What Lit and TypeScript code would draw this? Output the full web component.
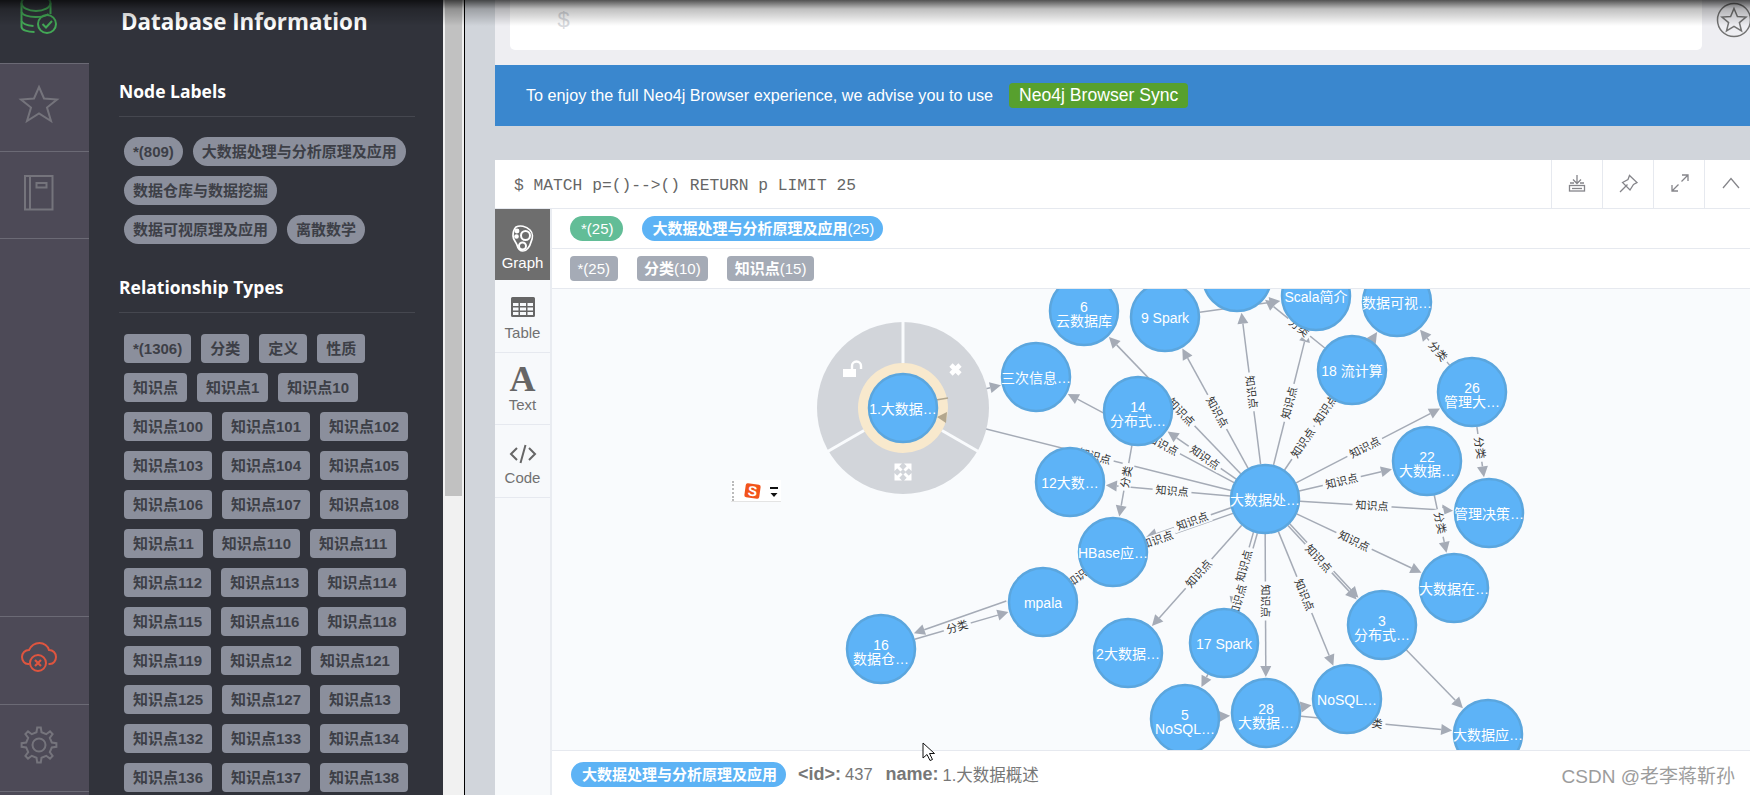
import { LitElement, html, css, svg } from "lit";
import { customElement } from "lit/decorators.js";

type N = { x: number; y: number; t: string[] };
const nodes: Record<string, N> = {
  n1: { x: 903, y: 408, t: ["1.大数据…"] },
  san: { x: 1036, y: 377, t: ["三次信息…"] },
  yun: { x: 1084, y: 311, t: ["6", "云数据库"] },
  s9: { x: 1165, y: 317, t: ["9 Spark"] },
  top: { x: 1237, y: 277, t: [] },
  scala: { x: 1316, y: 296, t: ["Scala简介"] },
  viz: { x: 1397, y: 302, t: ["数据可视…"] },
  s18: { x: 1352, y: 370, t: ["18 流计算"] },
  g26: { x: 1472, y: 392, t: ["26", "管理大…"] },
  d14: { x: 1138, y: 411, t: ["14", "分布式…"] },
  d22: { x: 1427, y: 461, t: ["22", "大数据…"] },
  hub: { x: 1265, y: 499, t: ["大数据处…"] },
  d12: { x: 1070, y: 482, t: ["12大数…"] },
  mg: { x: 1489, y: 513, t: ["管理决策…"] },
  hb: { x: 1113, y: 552, t: ["HBase应…"] },
  mp: { x: 1043, y: 602, t: ["mpala"] },
  d16: { x: 881, y: 649, t: ["16", "数据仓…"] },
  d2: { x: 1128, y: 653, t: ["2大数据…"] },
  s17: { x: 1224, y: 643, t: ["17 Spark"] },
  d5: { x: 1185, y: 719, t: ["5", "NoSQL…"] },
  d28: { x: 1266, y: 713, t: ["28", "大数据…"] },
  nq: { x: 1347, y: 699, t: ["NoSQL…"] },
  d3: { x: 1382, y: 625, t: ["3", "分布式…"] },
  zai: { x: 1454, y: 588, t: ["大数据在…"] },
  yy: { x: 1488, y: 734, t: ["大数据应…"] },
};

type E = { a: string; b: string; off?: number; off2?: number; labels?: [string, number, number][] };
const K = "知识点";
const F = "分类";
const edges: E[] = [
  { a: "hub", b: "yun", labels: [[K, 1180, 413]] },
  { a: "hub", b: "s9", labels: [[K, 1217, 412]] },
  { a: "hub", b: "top", labels: [[K, 1251, 392]] },
  { a: "hub", b: "scala", labels: [[K, 1290, 403]] },
  { a: "hub", b: "s18", labels: [[K, 1303, 443], [K, 1326, 410]] },
  { a: "hub", b: "g26", labels: [[K, 1365, 448]] },
  { a: "hub", b: "d22", labels: [[K, 1342, 482]] },
  { a: "hub", b: "mg", labels: [[K, 1372, 506]] },
  { a: "hub", b: "zai", labels: [[K, 1354, 541]] },
  { a: "hub", b: "d3", off: 1.2, labels: [[K, 1319, 558]] },
  { a: "hub", b: "d3", off: -1.2 },
  { a: "hub", b: "nq", labels: [[K, 1304, 595]] },
  { a: "hub", b: "d28", labels: [[K, 1266, 601]] },
  { a: "hub", b: "s17", off: 2, labels: [[K, 1247, 567]] },
  { a: "hub", b: "s17", off: -2, labels: [[K, 1230, 598]] },
  { a: "hub", b: "d2", labels: [[K, 1198, 573]] },
  { a: "hub", b: "hb", off: 3, labels: [[K, 1193, 523]] },
  { a: "hub", b: "hb", off: -3, labels: [[K, 1160, 548]] },
  { a: "hub", b: "d14", labels: [[K, 1205, 457]] },
  { a: "hub", b: "san", labels: [[K, 1162, 446]] },
  { a: "hub", b: "n1", labels: [[K, 1095, 455]] },
  { a: "hub", b: "d12", labels: [[K, 1172, 491]] },
  { a: "n1", b: "san" },
  { a: "d14", b: "hb", labels: [[F, 1127, 477]] },
  { a: "s18", b: "viz" },
  { a: "s18", b: "top", labels: [[F, 1297, 330]] },
  { a: "s9", b: "scala" },
  { a: "g26", b: "viz", labels: [[F, 1437, 352]] },
  { a: "g26", b: "mg", labels: [[F, 1479, 448]] },
  { a: "d22", b: "zai", labels: [[F, 1440, 523]] },
  { a: "hb", b: "mp", labels: [["知识", 1073, 573]] },
  { a: "mp", b: "d16", off: 13, off2: 4 },
  { a: "d16", b: "mp", labels: [[F, 957, 626]] },
  { a: "s17", b: "d5" },
  { a: "d5", b: "d28" },
  { a: "d28", b: "nq" },
  { a: "d28", b: "yy", labels: [["类", 1377, 724]] },
  { a: "d3", b: "yy" },
];

function edgeLine(e: E) {
  const A = nodes[e.a];
  const B = nodes[e.b];
  const off = e.off ?? 0;
  const off2 = e.off2 ?? off;
  const dx0 = B.x - A.x;
  const dy0 = B.y - A.y;
  const l0 = Math.hypot(dx0, dy0);
  const p = { x: -dy0 / l0, y: dx0 / l0 };
  const ax = A.x + p.x * off;
  const ay = A.y + p.y * off;
  const cx = B.x + p.x * off2;
  const cy = B.y + p.y * off2;
  const dx = cx - ax;
  const dy = cy - ay;
  const len = Math.hypot(dx, dy);
  const ux = dx / len;
  const uy = dy / len;
  const sx = ax + ux * 35;
  const sy = ay + uy * 35;
  const tip = e.b === "n1" ? 45 : 36;
  const tx = cx - ux * tip;
  const ty = cy - uy * tip;
  const bx = tx - ux * 11;
  const by = ty - uy * 11;
  const head = `${tx},${ty} ${bx - uy * 5.5},${by + ux * 5.5} ${bx + uy * 5.5},${by - ux * 5.5}`;
  let ang = (Math.atan2(dy, dx) * 180) / Math.PI;
  if (ang > 90) ang -= 180;
  if (ang <= -90) ang += 180;
  return { sx, sy, bx, by, head, ang, ux, uy };
}

function gearPath(cx: number, cy: number) {
  const pts: string[] = [];
  const teeth = 8;
  for (let i = 0; i < teeth; i++) {
    const a = (i * 2 * Math.PI) / teeth - Math.PI / 2;
    const s = (2 * Math.PI) / teeth;
    const p = (r: number, d: number) =>
      `${(cx + r * Math.cos(a + d * s)).toFixed(1)},${(cy + r * Math.sin(a + d * s)).toFixed(1)}`;
    pts.push(p(17.5, -0.13), p(17.5, 0.13), p(13, 0.25), p(13, 0.75));
  }
  return pts.join(" ");
}

const nodeLabels = ["*(809)", "大数据处理与分析原理及应用", "数据仓库与数据挖掘", "数据可视原理及应用", "离散数学"];
const relTypes = [
  "*(1306)", "分类", "定义", "性质", "知识点", "知识点1", "知识点10",
  ...[100, 101, 102, 103, 104, 105, 106, 107, 108, 11, 110, 111, 112, 113, 114, 115, 116, 118, 119, 12, 121, 125, 127, 13, 132, 133, 134, 136, 137, 138].map((n) => `知识点${n}`),
];

@customElement("app-root")
export class AppRoot extends LitElement {
  static styles = css`
    :host {
      display: flex;
      position: relative;
      width: 1750px;
      height: 795px;
      overflow: hidden;
      background: #d1d5db;
      font-family: "Liberation Sans", "Noto Sans CJK SC", sans-serif;
    }
    .nav {
      width: 89px;
      flex: none;
      background: #4d4a57;
      display: flex;
      flex-direction: column;
    }
    .nav svg { display: block; }
    .nav-top { height: 64px; box-sizing: border-box; background: #31333b; border-bottom: 1px solid #6b6a75; flex: none; }
    .nav-item { height: 87.5px; box-sizing: border-box; border-bottom: 1px solid #6b6a75; flex: none; }
    .nav-spacer { height: 378px; box-sizing: border-box; border-bottom: 1px solid #6b6a75; flex: none; }
    .ic { fill: none; stroke: #75747c; stroke-width: 2; }
    .drawer {
      width: 354px;
      flex: none;
      box-sizing: border-box;
      background: #31333b;
      padding: 4px 28px 0 30px;
      color: #fff;
      overflow: hidden;
    }
    .drawer h1 {
      font: 700 22.4px/36px "Open Sans", sans-serif;
      margin: 0 0 39px 2px;
    }
    .drawer h2 {
      font: 700 17.5px/24px "Open Sans", sans-serif;
      margin: 0;
      padding-bottom: 13px;
      border-bottom: 1px solid #45474f;
    }
    .chips {
      display: flex;
      flex-wrap: wrap;
      gap: 10px;
      padding: 20px 0 0 5px;
      width: 291px;
    }
    .chips.first { margin-bottom: 31px; }
    .chips.rels { padding-top: 21px; }
    .chip {
      height: 29px;
      line-height: 29px;
      padding: 0 9px;
      background: #8b8f9c;
      color: #3d3f47;
      font-size: 15px;
      font-weight: 700;
      border-radius: 4px;
      white-space: nowrap;
    }
    .chip.pill { border-radius: 15px; }
    .scroll {
      width: 22px;
      flex: none;
      background: #f1f1f1;
      border-right: 1px solid #000;
      box-sizing: border-box;
      padding: 0 2px;
    }
    .thumb { height: 496px; width: 17px; background: #c1c1c1; }
    .gutter { width: 30px; flex: none; }
    .main { flex: 1; display: flex; flex-direction: column; min-width: 0; }
    .editor-bar {
      height: 65px;
      flex: none;
      background: #eeeef2;
      display: flex;
      padding-left: 15px;
      box-sizing: border-box;
    }
    .editor {
      width: 1192px;
      height: 50px;
      flex: none;
      background: #fff;
      border-radius: 0 0 5px 5px;
      box-sizing: border-box;
      padding: 9px 0 0 47px;
      font: 22px/26px "Liberation Mono", monospace;
      color: #d8dade;
    }
    .fav { margin-left: 13px; flex: none; }
    .banner {
      height: 61px;
      flex: none;
      background: #3a87ce;
      color: #fff;
      display: flex;
      align-items: center;
      padding-left: 31px;
      font-size: 16.2px;
    }
    .sync {
      margin-left: 16px;
      background: #57a02e;
      border-radius: 4px;
      height: 25px;
      line-height: 24px;
      padding: 0 10px;
      font-size: 17.6px;
    }
    .frame {
      margin-top: 34px;
      flex: 1;
      background: #fff;
      display: flex;
      flex-direction: column;
      min-height: 0;
    }
    .frame-head {
      height: 49px;
      flex: none;
      box-sizing: border-box;
      border-bottom: 1px solid #e6e9ef;
      display: flex;
      align-items: stretch;
    }
    .query {
      flex: 1;
      padding: 14px 0 0 19px;
      font: 16.3px/24px "Liberation Mono", monospace;
      color: #666;
    }
    .hbtn { width: 51px; box-sizing: border-box; border-left: 1px solid #e6e9ef; flex: none; }
    .hbtn svg { display: block; }
    .hbtn.last { width: 46px; }
    .hi { fill: none; stroke: #85858a; stroke-width: 1.3; }
    .frame-body { flex: 1; display: flex; min-height: 0; }
    .side {
      width: 57px;
      flex: none;
      background: #f7f9fb;
      border-right: 2px solid #e9ecf1;
      box-sizing: border-box;
      color: #717171;
    }
    .tile {
      display: flex;
      flex-direction: column;
      align-items: center;
      justify-content: flex-end;
      box-sizing: border-box;
      border-bottom: 1px solid #e6e9ef;
      font-size: 15px;
      line-height: 18px;
      padding-bottom: 10px;
      width: 55px;
    }
    .tile svg { display: block; }
    .tile.active { background: #6e6e6e; color: #fff; border-bottom: none; height: 71px; padding-bottom: 8px; }
    .t-table { height: 73px; }
    .t-text { height: 72px; }
    .t-code { height: 73px; }
    .table-ic { margin-bottom: 7px; }
    .code-ic { margin-bottom: 5px; }
    .a-glyph { font: 700 36px/30px "Liberation Serif", serif; color: #666; margin-bottom: 2px; }
    .content { flex: 1; display: flex; flex-direction: column; min-width: 0; }
    .legend {
      height: 40px;
      flex: none;
      box-sizing: border-box;
      border-bottom: 1px solid #e6e9ef;
      display: flex;
      align-items: center;
      gap: 19px;
      padding-left: 18px;
      padding-bottom: 1px;
    }
    .tag {
      height: 25px;
      line-height: 25px;
      color: #fff;
      font-size: 15px;
      white-space: nowrap;
    }
    .tag b { font-weight: 700; }
    .tag.green { background: #62bd97; border-radius: 13px; padding: 0 9px 0 11px; }
    .tag.blue { background: #5db3f5; border-radius: 13px; padding: 0 8.5px 0 11px; }
    .tag.grey { background: #a5abb6; border-radius: 4px; padding: 0 7.5px; }
    .canvas { flex: 1; position: relative; background: #f9fbfd; overflow: hidden; min-height: 0; }
    .canvas > svg { display: block; }
    .ln { stroke: #a5abb6; stroke-width: 1.5; fill: none; }
    .hd { fill: #a5abb6; }
    .lbg { fill: #f9fbfd; }
    .lt { font: 11px "Liberation Sans", "Noto Sans CJK SC", sans-serif; fill: #333; text-anchor: middle; }
    .node { fill: #5db3f7; stroke: #5ba6de; stroke-width: 2.5; }
    .nt { font: 14px "Liberation Sans", "Noto Sans CJK SC", sans-serif; fill: #fff; text-anchor: middle; }
    .menu { fill: #d2d5da; }
    .ring { fill: #f8e9cd; }
    .gap { stroke: #f9fbfd; stroke-width: 3; }
    .mi { fill: #fff; }
    .tan { stroke: #b3a78e; stroke-width: 1.5; }
    .tanh { fill: #b3a78e; }
    .widget {
      position: absolute;
      left: 179px;
      top: 191px;
      width: 50px;
      height: 22px;
      box-sizing: border-box;
      background: #fff;
      border-bottom: 1px solid #e4e4e4;
      display: flex;
      align-items: center;
    }
    .grip { width: 2px; height: 20px; margin-left: 1px; border-left: 2px dotted #bbb; }
    .s-logo {
      margin-left: 9px;
      width: 15px;
      height: 14px;
      background: #f2541b;
      color: #fff;
      border-radius: 2px;
      transform: rotate(8deg);
      font: 700 14px/14px "Liberation Sans", sans-serif;
      text-align: center;
    }
    .caret { margin-left: 9px; }
    .foot {
      height: 45px;
      flex: none;
      box-sizing: border-box;
      background: #fff;
      border-top: 1px solid #e6e9ef;
      display: flex;
      align-items: center;
      padding: 2px 0 0 19px;
      color: #777;
      font-size: 16.5px;
    }
    .foot .tag { background: #5db3f5; border-radius: 13px; padding: 0 9px 0 11px; font-weight: 700; margin-right: 12px; font-size: 15px; }
    .foot b { margin-right: 4px; font-size: 18px; }
    .foot span.v { margin-right: 13px; }
    .mark {
      margin-left: auto;
      margin-right: 15px;
      color: #9c9c9c;
      font-size: 19px;
    }
    .shade {
      position: absolute;
      left: 0;
      right: 0;
      top: 0;
      height: 26px;
      pointer-events: none;
      background: linear-gradient(to bottom, rgba(0, 0, 0, 0.68), rgba(0, 0, 0, 0.25) 9px, rgba(0, 0, 0, 0));
    }
    .cursor { position: absolute; left: 922px; top: 742px; pointer-events: none; }
  `;

  private graph() {
    const lines = edges.map((e) => {
      const l = edgeLine(e);
      return svg`<line class="ln" x1=${l.sx} y1=${l.sy} x2=${l.bx} y2=${l.by}></line><polygon class="hd" points=${l.head}></polygon>`;
    });
    const labels = edges.flatMap((e) => {
      const l = edgeLine(e);
      return (e.labels ?? []).map(([t, x, y]) => {
        const k = (x - l.sx) * l.ux + (y - l.sy) * l.uy;
        const px = l.sx + l.ux * k;
        const py = l.sy + l.uy * k;
        const w = t.length * 11 + 6;
        return svg`<g transform="translate(${px} ${py}) rotate(${l.ang})"><rect class="lbg" x=${-w / 2} y="-6" width=${w} height="12"></rect><text class="lt" y="4">${t}</text></g>`;
      });
    });
    const circles = Object.entries(nodes).map(([k, n]) => {
      const c = svg`<circle class="node" cx=${n.x} cy=${n.y} r="34"></circle>`;
      const text =
        n.t.length === 2
          ? svg`<text class="nt" x=${n.x} y=${n.y + 1}>${n.t[0]}</text><text class="nt" x=${n.x} y=${n.y + 15}>${n.t[1]}</text>`
          : svg`<text class="nt" x=${n.x} y=${n.y + 6}>${n.t[0] ?? ""}</text>`;
      return k === "n1" ? svg`` : svg`${c}${text}`;
    });
    const cx = 903;
    const cy = 408;
    const ray = (deg: number) => {
      const r = (deg * Math.PI) / 180;
      return svg`<line class="gap" x1=${cx + 45 * Math.cos(r)} y1=${cy - 45 * Math.sin(r)} x2=${cx + 88 * Math.cos(r)} y2=${cy - 88 * Math.sin(r)}></line>`;
    };
    return html`<svg width="1198" height="461" viewBox="552 289 1198 461">
      ${lines}${labels}
      <circle class="menu" cx=${cx} cy=${cy} r="86"></circle>
      <circle class="ring" cx=${cx} cy=${cy} r="45"></circle>
      ${ray(90)}${ray(210)}${ray(330)}
      <line class="tan" x1="936" y1="400" x2="948" y2="398"></line>
      <polygon class="tanh" points="937,417 947,412 946,423"></polygon>
      <circle class="node" cx=${cx} cy=${cy} r="34"></circle>
      <text class="nt" x=${cx} y=${cy + 6}>1.大数据…</text>
      <path class="mi" d="M843 369h13v8h-13z"></path>
      <path d="M852 369v-3a4.5 4.5 0 0 1 9 0v3" fill="none" stroke="#fff" stroke-width="2.4"></path>
      <path d="M951 365l9 9M960 365l-9 9" stroke="#fff" stroke-width="4.6" fill="none"></path>
      <path class="mi" d="M894.500 463.500h7.500l-7.500 7.500zM911.500 463.500v7.500l-7.500-7.500zM894.500 480.500v-7.500l7.500 7.500zM911.500 480.500h-7.500l7.500-7.500z"></path>
      <path d="M897 466l4.500 4.500M909 466l-4.500 4.500M897 478l4.500-4.500M909 478l-4.500-4.500" stroke="#fff" stroke-width="3" fill="none"></path>
      ${circles}
    </svg>`;
  }

  render() {
    return html`
      <div class="nav">
        <div class="nav-top">
          <svg width="89" height="63" fill="none" stroke="#43a856" stroke-width="2">
            <ellipse cx="36" cy="3" rx="14.5" ry="8"></ellipse>
            <path d="M21.5 3v24c0 3 6 5 13 5"></path>
            <path d="M50.5 3v11"></path>
            <path d="M21.5 12c1 3 7 5 14 5 6 0 10-1 13-3"></path>
            <path d="M21.5 21c1 3 6 4.500 12 5"></path>
            <circle cx="47" cy="24" r="9"></circle>
            <path d="M42.500 24l3.500 3.500 6-6.500"></path>
          </svg>
        </div>
        <div class="nav-item">
          <svg width="89" height="86" viewBox="0 64 89 86">
            <path class="ic" d="M39 87l5 11.500 13 1-10 8 4 13.500-12-7.500-12 7.500 4-13.500-10-8 13-1z"></path>
          </svg>
        </div>
        <div class="nav-item">
          <svg width="89" height="86" viewBox="0 151 89 86">
            <path class="ic" d="M25 175h27.500v33.500H25zM30 175v33.500M36.500 182h10v4.500h-10z"></path>
          </svg>
        </div>
        <div class="nav-spacer"></div>
        <div class="nav-item">
          <svg width="89" height="86" viewBox="0 617 89 86" fill="none" stroke="#de553f" stroke-width="2">
            <path d="M29.500 664h-1.500C24.500 664 22 660.500 22 657c0-4 3-7 7-7 2-4 6-7 10.500-7 4.500 0 8.500 3 9.500 7 4 0 7 3 7 7 0 3.500-2.500 7-6 7h-1.500"></path>
            <circle cx="38" cy="663" r="8"></circle>
            <path d="M35 660l6 6M41 660l-6 6" stroke-width="2.200"></path>
          </svg>
        </div>
        <div class="nav-item">
          <svg width="89" height="86" viewBox="0 704 89 86">
            <polygon class="ic" points=${gearPath(39, 744)}></polygon>
            <circle class="ic" cx="39" cy="744" r="6.500"></circle>
          </svg>
        </div>
      </div>

      <div class="drawer">
        <h1>Database Information</h1>
        <h2>Node Labels</h2>
        <div class="chips first">${nodeLabels.map((t) => html`<div class="chip pill">${t}</div>`)}</div>
        <h2>Relationship Types</h2>
        <div class="chips rels">${relTypes.map((t) => html`<div class="chip">${t}</div>`)}</div>
      </div>

      <div class="scroll"><div class="thumb"></div></div>
      <div class="gutter"></div>

      <div class="main">
        <div class="editor-bar">
          <div class="editor">$</div>
          <svg class="fav" width="40" height="42" fill="none" stroke="#737373" stroke-width="1.500">
            <circle cx="19" cy="20" r="16.500"></circle>
            <path d="M19 8.500l3.400 8 8.600.6-6.600 5.500 2.100 8.400-7.500-4.600-7.500 4.600 2.100-8.400-6.600-5.500 8.600-.6z"></path>
          </svg>
        </div>
        <div class="banner">
          To enjoy the full Neo4j Browser experience, we advise you to use
          <div class="sync">Neo4j Browser Sync</div>
        </div>
        <div class="frame">
          <div class="frame-head">
            <div class="query">$ MATCH p=()--&gt;() RETURN p LIMIT 25</div>
            <div class="hbtn">
              <svg width="50" height="48" class="hi">
                <path d="M25 15v8M21 19.500l4 4 4-4M18 23h4M28 23h4"></path>
                <rect x="17.500" y="25.500" width="15" height="5.500"></rect>
                <path d="M20 28.500h10"></path>
              </svg>
            </div>
            <div class="hbtn">
              <svg width="50" height="48" class="hi">
                <path d="M17 32l7.500-7.500M19.500 22.500L25 19.500l1.500-4L34 22.500l-3.500 2L27 30z"></path>
              </svg>
            </div>
            <div class="hbtn">
              <svg width="50" height="48" class="hi">
                <path d="M18 31l6.500-6.500M27.500 21.500L34 15M18 25v6h6M28 15h6v6"></path>
              </svg>
            </div>
            <div class="hbtn last">
              <svg width="46" height="48" class="hi"><path d="M18 28l8-9.500 8 9.500"></path></svg>
            </div>
          </div>
          <div class="frame-body">
            <div class="side">
              <div class="tile active">
                <svg width="24" height="30" viewBox="0 0 24 30" fill="none" stroke="#fff" stroke-width="1.700">
                  <path d="M5 3c4-2 10-1 14 3 3 3 3 8 1 12-1 4-4 9-8 9-3 0-5-2-6-6-1-3-4-5-4-9 0-4 1-7 3-9z"></path>
                  <circle cx="14.500" cy="11.500" r="4.500" stroke-width="2"></circle>
                  <circle cx="11.500" cy="22" r="3.500" stroke-width="2"></circle>
                  <circle cx="6" cy="7" r="1.600" fill="#fff"></circle>
                  <circle cx="5.500" cy="12.500" r="1.500" fill="#fff"></circle>
                </svg>
                Graph
              </div>
              <div class="tile t-table">
                <svg class="table-ic" width="24" height="20" viewBox="0 0 24 20">
                  <path fill="#666" fill-rule="evenodd" d="M1.500 0h21A1.500 1.500 0 0 1 24 1.500v17a1.500 1.500 0 0 1-1.500 1.500h-21A1.500 1.500 0 0 1 0 18.500v-17A1.500 1.500 0 0 1 1.500 0zM2 6v3h5.500V6zM9 6v3h6V6zM16.500 6v3H22V6zM2 10.500v3h5.500v-3zM9 10.500v3h6v-3zM16.500 10.500v3H22v-3zM2 15v3h5.500v-3zM9 15v3h6v-3zM16.500 15v3H22v-3z"></path>
                </svg>
                Table
              </div>
              <div class="tile t-text">
                <div class="a-glyph">A</div>
                Text
              </div>
              <div class="tile t-code">
                <svg class="code-ic" width="28" height="20" viewBox="0 0 28 20" fill="none" stroke="#666" stroke-width="2">
                  <path d="M8 4l-6 6 6 6M20 4l6 6-6 6M16.500 1l-5 18"></path>
                </svg>
                Code
              </div>
            </div>
            <div class="content">
              <div class="legend">
                <div class="tag green">*(25)</div>
                <div class="tag blue"><b>大数据处理与分析原理及应用</b>(25)</div>
              </div>
              <div class="legend">
                <div class="tag grey">*(25)</div>
                <div class="tag grey"><b>分类</b>(10)</div>
                <div class="tag grey"><b>知识点</b>(15)</div>
              </div>
              <div class="canvas">
                ${this.graph()}
                <div class="widget">
                  <div class="grip"></div>
                  <div class="s-logo">S</div>
                  <svg class="caret" width="10" height="14"><path d="M1 3h8v2H1zM1.500 9h7L5 13z" fill="#111"></path></svg>
                </div>
              </div>
              <div class="foot">
                <div class="tag">大数据处理与分析原理及应用</div>
                <b>&lt;id&gt;:</b><span class="v">437</span>
                <b>name:</b><span>1.大数据概述</span>
                <span class="mark">CSDN @老李蒋靳孙</span>
              </div>
            </div>
          </div>
        </div>
      </div>
      <div class="shade"></div>
      <svg class="cursor" width="14" height="20"><path d="M1 1v15l4-3.500 3 6 2.500-1-3-6h5z" fill="#fff" stroke="#111" stroke-width="1"></path></svg>
    `;
  }
}
